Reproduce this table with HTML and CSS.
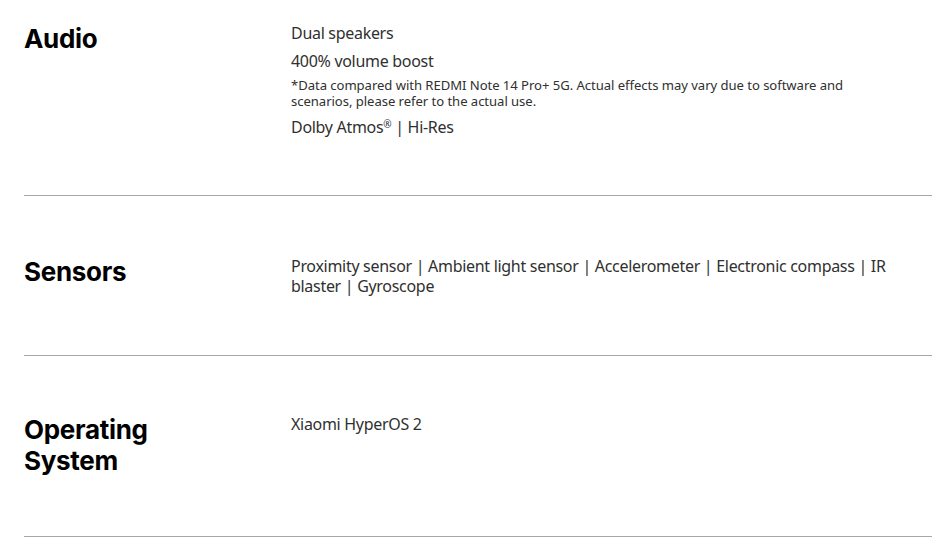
FILE: index.html
```html
<!DOCTYPE html>
<html lang="en">
<head>
<meta charset="utf-8">
<title>Specs</title>
<link rel="stylesheet" href="styles.css">
</head>
<body>
<main class="specs">
  <section class="spec spec-first">
    <h2 class="spec-title">Audio</h2>
    <div class="spec-values">
      <p class="value">Dual speakers</p>
      <p class="value">400% volume boost</p>
      <p class="note">*Data compared with REDMI Note 14 Pro+ 5G. Actual effects may vary due to software and scenarios, please refer to the actual use.</p>
      <p class="value">Dolby Atmos<sup class="reg">®</sup> | Hi-Res</p>
    </div>
  </section>
  <section class="spec">
    <h2 class="spec-title">Sensors</h2>
    <div class="spec-values">
      <p class="value">Proximity sensor | Ambient light sensor | Accelerometer | Electronic compass | IR blaster | Gyroscope</p>
    </div>
  </section>
  <section class="spec spec-last">
    <h2 class="spec-title">Operating<br>System</h2>
    <div class="spec-values">
      <p class="value">Xiaomi HyperOS 2</p>
    </div>
  </section>
</main>
</body>
</html>
```
FILE: styles.css
```css
* { box-sizing: border-box; }
html, body { margin: 0; padding: 0; background: #fff; }
body {
  font-family: "Noto Sans", "Liberation Sans", sans-serif;
  color: #303030;
}
.specs {
  padding: 0 18px 0 24px;
}
.spec {
  display: grid;
  grid-template-columns: 267px 605px;
  padding: 60px 0 59px;
  border-bottom: 1px solid #a8a8a8;
}
.spec-first {
  padding-top: 23px;
  padding-bottom: 58px;
}
.spec-last {
  padding-top: 58px;
  padding-bottom: 60px;
}
.spec-title {
  margin: 0;
  font-family: Inter, "Noto Sans", sans-serif;
  font-weight: 700;
  font-size: 26px;
  line-height: 31px;
  color: #000;
  letter-spacing: -0.3px;
}
.spec-values {
  display: flex;
  flex-direction: column;
  gap: 8px;
}
.value {
  margin: 0;
  font-size: 16px;
  line-height: 20px;
  letter-spacing: -0.3px;
}
.note {
  margin: -2px 0 0;
  font-size: 13.1px;
  line-height: 16px;
  letter-spacing: -0.05px;
}
.reg {
  font-size: 10px;
  line-height: 0;
  vertical-align: 5px;
}
```
